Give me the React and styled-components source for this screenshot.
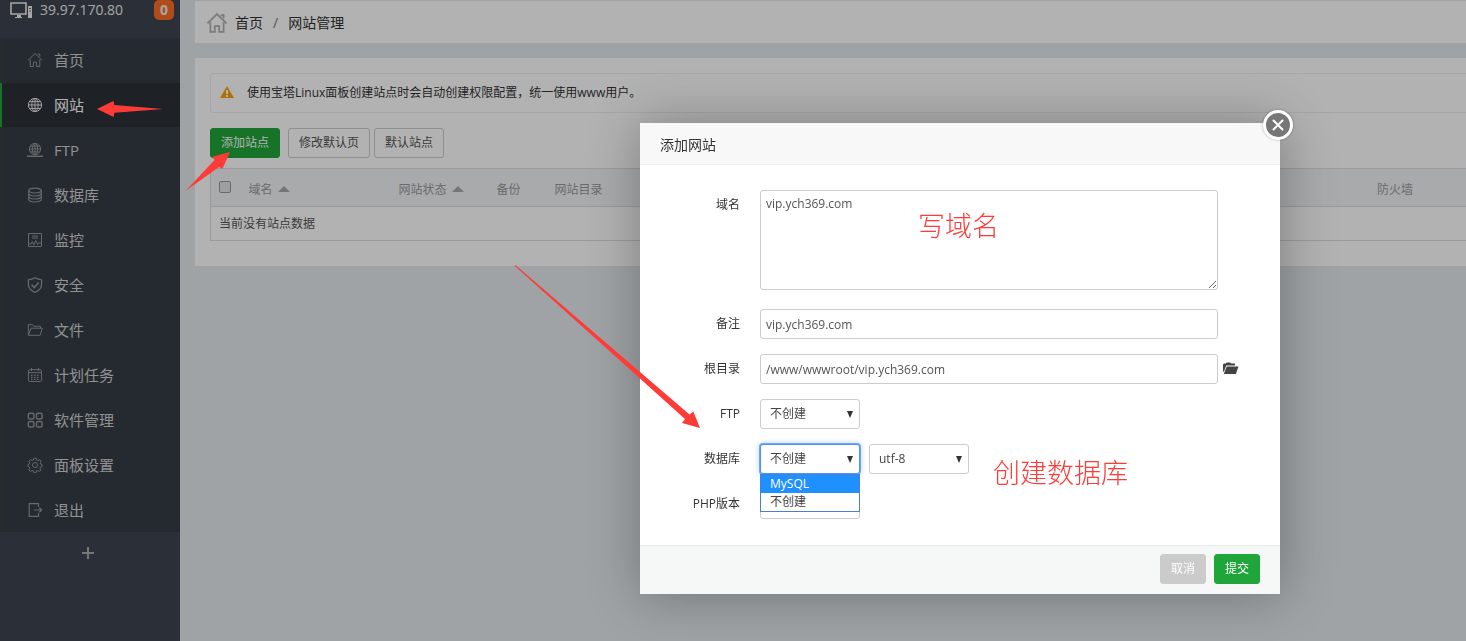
import React from 'react';
import styled, { createGlobalStyle } from 'styled-components';

const GlobalStyle = createGlobalStyle`
	* {
		box-sizing: border-box;
	}
	body {
		margin: 0;
		overflow: hidden;
		background: #e4eaee;
		color: #333;
		font: 12px/18px 'Open Sans', 'Noto Sans CJK SC', sans-serif;
	}
	button,
	input,
	select,
	textarea {
		font: inherit;
		color: inherit;
	}
	a {
		color: inherit;
		text-decoration: none;
	}
`;

const icons = {
	home: (
		<>
			<path d='M1 8.2 8 1.5l7 6.7M3.2 7.5v7h3.2v-4.3h3.2v4.3h3.2v-7' />
			<path d='M10.8 2.2h2v2.3' />
		</>
	),
	globe: (
		<>
			<circle cx='8' cy='8' r='6.6' />
			<ellipse cx='8' cy='8' rx='3.2' ry='6.6' />
			<path d='M8 1.4v13.2M1.4 8h13.2M2.4 4.6h11.2M2.4 11.4h11.2' />
		</>
	),
	ftp: (
		<>
			<circle cx='8' cy='7' r='5.6' />
			<ellipse cx='8' cy='7' rx='2.7' ry='5.6' />
			<path d='M8 1.4v11.2M2.4 7h11.2M3.4 4.2h9.2M3.4 9.8h9.2' />
			<path d='M0 14.2h16M6 14.2h4' strokeWidth='1.6' />
		</>
	),
	database: (
		<g strokeWidth='1.2'>
			<ellipse cx='8' cy='3.6' rx='6.3' ry='2.4' />
			<path d='M1.7 3.6v9c0 1.3 2.8 2.4 6.3 2.4s6.3-1.1 6.3-2.4v-9' />
			<path d='M1.7 6.6C1.7 8 4.5 9 8 9s6.3-1 6.3-2.4M1.7 9.6C1.7 11 4.5 12 8 12s6.3-1 6.3-2.4' />
		</g>
	),
	monitor: (
		<>
			<path d='M1.5 1.5h13v13h-13z' />
			<path d='M5 4h6M5 6h6M2 12h2l1.3-2.5L6.8 13l2-4.5 1.7 4 1-1.5H14' />
		</>
	),
	shield: (
		<>
			<path
				d='M8 .8c2 1.3 4.2 1.9 6.6 2v4.8c0 3.6-2.700 6.200-6.600 7.900-3.900-1.700-6.600-4.300-6.600-7.900V2.800C3.800 2.700 6 2.100 8 .8z'
				strokeWidth='1.3'
			/>
			<path d='m4.600 7.800 2.600 2.700 4.600-5' strokeWidth='1.6' />
		</>
	),
	folder: (
		<>
			<path d='M1.4 13V2.6h4.2l1.3 1.7h6.500v2' />
			<path d='M1.4 13.300 4 6.200h11.300l-2.200 7.100z' />
		</>
	),
	calendar: (
		<>
			<rect x='1.5' y='2.7' width='13' height='11.8' rx='1.2' />
			<path d='M4.5 1v3M11.5 1v3M1.5 5.7h13' />
			<path d='M4 8.3h8M4 10.3h8M4 12.3h8' strokeDasharray='1.5 1.5' strokeWidth='1.2' />
		</>
	),
	grid: (
		<g strokeWidth='1.5'>
			<rect x='1.3' y='1.3' width='5.6' height='5.6' rx='1.5' />
			<rect x='9.5' y='1.3' width='5.6' height='5.6' rx='1.5' />
			<rect x='1.3' y='9.5' width='5.6' height='5.6' rx='1.5' />
			<rect x='9.5' y='9.5' width='5.6' height='5.6' rx='1.5' />
		</g>
	),
	gear: (
		<>
			<path d='M6.7 1.3h2.6l.4 1.9 1.2.5 1.7-1.1 1.5 1.6-1 1.7.4 1.1 1.5.3v2.3l-1.6.4-.5 1.2 1.1 1.7-1.6 1.5-1.6-1-1.3.5-.3 1.5H6.7l-.4-1.6-1.2-.4-1.6 1-1.7-1.6 1.1-1.7-.5-1.1-1.4-.4V7.3l1.5-.3.5-1.2-1.1-1.6 1.6-1.6 1.7 1 1.1-.5z' />
			<circle cx='8' cy='8' r='2.5' />
		</>
	),
	exit: (
		<g strokeWidth='1.2'>
			<path d='M11.5 5V1.6H2.2v12.8h9.3V11' />
			<path d='M7 8h7.6M12.3 5.7 14.7 8l-2.4 2.3' />
		</g>
	),
};

const menu = [
	['home', '首页'],
	['globe', '网站'],
	['ftp', 'FTP'],
	['database', '数据库'],
	['monitor', '监控'],
	['shield', '安全'],
	['folder', '文件'],
	['calendar', '计划任务'],
	['grid', '软件管理'],
	['gear', '面板设置'],
	['exit', '退出'],
];

const Icon = ({ name, size = 16 }) => (
	<IconSvg width={size} height={size} viewBox='0 0 16 16' aria-hidden='true'>
		{icons[name]}
	</IconSvg>
);

const Sidebar = () => (
	<SidebarStyle>
		<Server>
			<svg width='24' height='18' viewBox='0 0 24 18' aria-hidden='true'>
				<path d='M1 2h15v11H1z' fill='none' stroke='currentColor' strokeWidth='1.6' />
				<path d='M7 14h4v2h1v1H5v-1h2zM18 5h4v12h-4z' fill='currentColor' />
				<path d='M19.3 7.5h1.500M19.300 10h1.500' stroke='#3e444f' />
			</svg>
			<span>39.97.170.80</span>
			<Badge>0</Badge>
		</Server>
		<Menu>
			{menu.map(([icon, text]) => (
				<li key={icon}>
					<MenuLink href={'#' + icon} $active={icon === 'globe'}>
						<Icon name={icon} />
						{text}
					</MenuLink>
				</li>
			))}
		</Menu>
		<AddMenu aria-label='添加'>
			<svg width='14' height='14' viewBox='0 0 14 14' aria-hidden='true'>
				<path d='M7 1v12M1 7h12' stroke='currentColor' strokeWidth='2' />
			</svg>
		</AddMenu>
	</SidebarStyle>
);

const SiteTable = () => (
	<Table>
		<thead>
			<tr>
				<Th $width={30}>
					<Checkbox type='checkbox' aria-label='全选' />
				</Th>
				<Th $width={150}>
					域名 <SortMark />
				</Th>
				<Th $width={98}>
					网站状态 <SortMark />
				</Th>
				<Th $width={58}>备份</Th>
				<Th>网站目录</Th>
				<Th $width={97}>防火墙</Th>
			</tr>
		</thead>
		<tbody>
			<tr>
				<Td colSpan={6}>当前没有站点数据</Td>
			</tr>
		</tbody>
	</Table>
);

const Select = ({ id, options, label, focused }) => (
	<SelectWrap>
		<SelectBox id={id} aria-label={label} $focused={focused}>
			{options.map(option => (
				<option key={option}>{option}</option>
			))}
		</SelectBox>
	</SelectWrap>
);

const AddSiteDialog = () => (
	<Dialog role='dialog' aria-labelledby='dialog-title'>
		<DialogTitle id='dialog-title'>添加网站</DialogTitle>
		<CloseBtn aria-label='关闭'>
			<svg width='12' height='12' viewBox='0 0 12 12' aria-hidden='true'>
				<path d='m1.5 1.5 9 9M10.5 1.5l-9 9' stroke='#fff' strokeWidth='2' strokeLinecap='round' />
			</svg>
		</CloseBtn>
		<Form>
			<Row>
				<Label htmlFor='domain'>域名</Label>
				<TextArea id='domain' defaultValue='vip.ych369.com' />
			</Row>
			<Row>
				<Label htmlFor='remark'>备注</Label>
				<Input id='remark' defaultValue='vip.ych369.com' />
			</Row>
			<Row>
				<Label htmlFor='root-dir'>根目录</Label>
				<Input id='root-dir' defaultValue='/www/wwwroot/vip.ych369.com' />
				<FolderBtn type='button' aria-label='选择目录'>
					<svg width='16' height='14' viewBox='0 0 16 14' aria-hidden='true'>
						<path d='M0 10V2.5L1 1.5h1.8L3.5.5h3.800l.8 1H12v2H3.200L1.200 9z' fill='#444' />
						<path d='M3.700 4.500H15.500L12.900 12H.8z' fill='#444' />
					</svg>
				</FolderBtn>
			</Row>
			<Row>
				<Label htmlFor='ftp-account'>FTP</Label>
				<Select id='ftp-account' options={['不创建', '创建']} />
			</Row>
			<Row>
				<Label htmlFor='db-type'>数据库</Label>
				<DbField>
					<Select id='db-type' options={['不创建', 'MySQL']} focused />
					<Options>
						<Option $active>MySQL</Option>
						<Option>不创建</Option>
					</Options>
				</DbField>
				<Select label='字符集' options={['utf-8', 'gbk', 'big5']} />
			</Row>
			<Row>
				<Label htmlFor='php-version'>PHP版本</Label>
				<Select id='php-version' options={['']} />
			</Row>
		</Form>
		<DialogFooter>
			<Button $kind='muted'>取消</Button>
			<Button $kind='primary'>提交</Button>
		</DialogFooter>
	</Dialog>
);

const Annotations = () => (
	<>
		<Arrows aria-hidden='true'>
			<path d='M97 109 113.500 101 114.300 105 163 109 114.300 112.700 113.700 117z' />
			<path d='M230 152 222.500 168.700 219 167 185.500 191 214.500 160 212.500 156.700z' />
			<path d='M700 428 682 423 685 419 514.600 265.800 515.400 265 689.500 414.500 693.300 411.500z' />
		</Arrows>
		<Note $left={918} $top={207}>
			写域名
		</Note>
		<Note $left={993} $top={454}>
			创建数据库
		</Note>
	</>
);

const App = () => (
	<Layout>
		<GlobalStyle />
		<Sidebar />
		<Main>
			<Breadcrumb>
				<Icon name='home' size={22} />
				<a href='#home'>首页</a>
				<Slash>/</Slash>
				<span>网站管理</span>
			</Breadcrumb>
			<Panel>
				<Notice>
					<svg width='14' height='14' viewBox='0 0 14 14' aria-hidden='true'>
						<path d='M7 0 14 12H0z' fill='#ff9f0a' />
						<path d='M7 4v4M7 9v2' stroke='#fff' strokeWidth='2' />
					</svg>
					{'使用宝塔Linux面板创建站点时会自动创建权限配置\uff0c统一使用www用户。'}
				</Notice>
				<Toolbar>
					<Button $kind='primary'>添加站点</Button>
					<ButtonGroup>
						<Button>修改默认页</Button>
						<Button>默认站点</Button>
					</ButtonGroup>
				</Toolbar>
				<SiteTable />
			</Panel>
		</Main>
		<Shade />
		<AddSiteDialog />
		<Annotations />
	</Layout>
);

export default App;

const Layout = styled.div`
	display: flex;
	min-height: 100vh;
`;

const IconSvg = styled.svg`
	flex: none;
	fill: none;
	stroke: currentColor;
	stroke-width: 1;
`;

const SidebarStyle = styled.nav`
	width: 180px;
	flex: none;
	background: #3e444f;
`;

const Server = styled.div`
	display: flex;
	align-items: center;
	height: 38px;
	padding: 0 6px 18px 10px;
	gap: 6px;
	color: #eee;
	font-size: 14px;
`;

const Badge = styled.span`
	width: 20px;
	height: 20px;
	margin-left: auto;
	border-radius: 5px;
	background: #fc6d26;
	font-weight: bold;
	line-height: 20px;
	text-align: center;
`;

const Menu = styled.ul`
	display: grid;
	gap: 1px;
	margin: 0;
	padding: 0;
	background: #363d45;
	list-style: none;
`;

const MenuLink = styled.a`
	display: flex;
	align-items: center;
	gap: 11px;
	height: 44px;
	padding-left: 25px;
	border-left: 2px solid ${props => (props.$active ? '#20a53a' : '#3a3d3e')};
	background: ${props => (props.$active ? '#2c3138' : '#363d45')};
	color: ${props => (props.$active ? '#fff' : '#d0d0d0')};
	font-size: 15px;

	svg {
		opacity: ${props => (props.$active ? 0.9 : 0.6)};
	}
`;

const AddMenu = styled.button`
	display: grid;
	place-items: center;
	width: 100%;
	height: 42px;
	padding: 0 4px 0 0;
	border: 0;
	background: none;
	color: #aaa;
`;

const Main = styled.main`
	flex: 1;
	min-width: 0;
	padding: 1px 0 0 15px;
`;

const Breadcrumb = styled.div`
	display: flex;
	align-items: center;
	height: 42px;
	margin-bottom: 15px;
	padding: 2px 0 0 11px;
	background: #fff;
	font-size: 14px;

	svg {
		margin-right: 7px;
		color: #b0b0b0;
		stroke-width: 1.3;
	}
`;

const Slash = styled.span`
	margin: 0 10px;
	color: #777;
`;

const Panel = styled.section`
	padding: 15px 0 25px 15px;
	background: #fff;
`;

const Notice = styled.div`
	display: flex;
	align-items: center;
	gap: 13px;
	height: 40px;
	margin-bottom: 15px;
	padding-left: 9px;
	border: 1px solid #f0f0f0;
	border-right: 0;
	border-radius: 3px 0 0 3px;
`;

const Toolbar = styled.div`
	display: flex;
	gap: 8px;
	margin-bottom: 10px;
`;

const ButtonGroup = styled.div`
	display: flex;
	gap: 4px;
`;

const kinds = {
	plain: ['#fff', '#ccc', '#555'],
	primary: ['#20a53a', '#20a53a', '#fff'],
	muted: ['#cbcbcb', '#cbcbcb', '#fff'],
};

const Button = styled.button`
	height: 30px;
	padding: 0 10px;
	border: 1px solid ${props => kinds[props.$kind || 'plain'][1]};
	border-radius: 3px;
	background: ${props => kinds[props.$kind || 'plain'][0]};
	color: ${props => kinds[props.$kind || 'plain'][2]};
	line-height: 18px;
`;

const Table = styled.table`
	width: 100%;
	table-layout: fixed;
	border: 1px solid #ddd;
	border-right: 0;
	border-collapse: collapse;
`;

const Th = styled.th`
	width: ${props => (props.$width ? props.$width + 'px' : 'auto')};
	height: 38px;
	padding: 4px 0 0 8px;
	border-bottom: 1px solid #ddd;
	background: #f3f4f7;
	color: #999;
	font-weight: normal;
	text-align: left;
`;

const Td = styled.td`
	height: 34px;
	padding: 0 8px;
	color: #555;
`;

const Checkbox = styled.input`
	display: block;
	width: 12px;
	height: 12px;
	margin: 0 0 6px;
	border: 1px solid #999;
	border-radius: 2px;
	background: #e4e4e4;
	appearance: none;
`;

const SortMark = styled.span`
	display: inline-block;
	margin: 0 0 2px 2px;
	border: 6px solid transparent;
	border-top: 0;
	border-bottom-color: #aaa;
`;

const Shade = styled.div`
	position: fixed;
	inset: 0;
	background: rgba(0, 0, 0, 0.3);
`;

const Dialog = styled.div`
	position: absolute;
	top: 123px;
	left: 640px;
	width: 640px;
	background: #fff;
	box-shadow: 1px 1px 50px rgba(0, 0, 0, 0.3);
`;

const DialogTitle = styled.h2`
	height: 42px;
	margin: 0;
	padding: 0 20px;
	border-bottom: 1px solid #eee;
	background: #f8f8f8;
	font-size: 14px;
	font-weight: normal;
	line-height: 44px;
`;

const CloseBtn = styled.button`
	position: absolute;
	top: -13px;
	right: -13px;
	display: grid;
	place-items: center;
	width: 30px;
	height: 30px;
	padding: 0;
	border: 3px solid #fff;
	border-radius: 50%;
	background: #777;
	box-shadow: 0 0 3px rgba(0, 0, 0, 0.3);
`;

const Form = styled.form`
	display: grid;
	gap: 15px;
	padding: 25px 20px 26px 0;
`;

const Row = styled.div`
	display: flex;
	align-items: flex-start;
`;

const Label = styled.label`
	width: 100px;
	margin-right: 20px;
	line-height: 30px;
	text-align: right;
`;

const Input = styled.input`
	width: 458px;
	height: 30px;
	padding: 0 5px;
	border: 1px solid #ccc;
	border-radius: 3px;
	background: #fff;
	color: #555;
`;

const TextArea = styled.textarea`
	width: 458px;
	height: 100px;
	margin-bottom: 4px;
	padding: 4px 5px;
	border: 1px solid #ccc;
	border-radius: 3px;
	color: #555;
`;

const FolderBtn = styled.button`
	height: 30px;
	padding: 4px 5px 0;
	border: 0;
	background: none;
`;

const SelectWrap = styled.div`
	position: relative;
	width: 100px;

	&::after {
		content: '';
		position: absolute;
		top: 12px;
		right: 7px;
		border: 3px solid transparent;
		border-top: 7px solid #333;
		border-bottom: 0;
		pointer-events: none;
	}
`;

const SelectBox = styled.select`
	display: block;
	width: 100%;
	height: 30px;
	padding: 0 9px;
	border: 1px solid ${props => (props.$focused ? '#4d90fe' : '#ccc')};
	border-radius: 3px;
	background: #fff;
	box-shadow: ${props => (props.$focused ? '0 0 0 1px #6fa8f5, 0 0 6px #9cc4f8' : 'none')};
	color: #444;
	appearance: none;
`;

const DbField = styled.div`
	position: relative;
	margin-right: 9px;
`;

const Options = styled.ul`
	position: absolute;
	top: 30px;
	left: 0;
	z-index: 1;
	width: 100%;
	margin: 0;
	padding: 0;
	border: 1px solid #4a80d4;
	background: #fff;
	list-style: none;
`;

const Option = styled.li`
	height: 18px;
	padding-left: 9px;
	background: ${props => (props.$active ? '#1e90ff' : '#fff')};
	color: ${props => (props.$active ? '#fff' : '#444')};
`;

const DialogFooter = styled.div`
	display: flex;
	justify-content: flex-end;
	gap: 8px;
	padding: 8px 20px 10px;
	border-top: 1px solid #eaecec;
	background: #f6f8f7;
`;

const Arrows = styled.svg`
	position: absolute;
	top: 0;
	left: 0;
	width: 100%;
	height: 100%;
	fill: #ff3b38;
	pointer-events: none;
`;

const Note = styled.span`
	position: absolute;
	top: ${props => props.$top}px;
	left: ${props => props.$left}px;
	color: #ff3b38;
	font-family: 'Noto Sans CJK SC', sans-serif;
	font-size: 27px;
	font-weight: 300;
	line-height: 36px;
`;
